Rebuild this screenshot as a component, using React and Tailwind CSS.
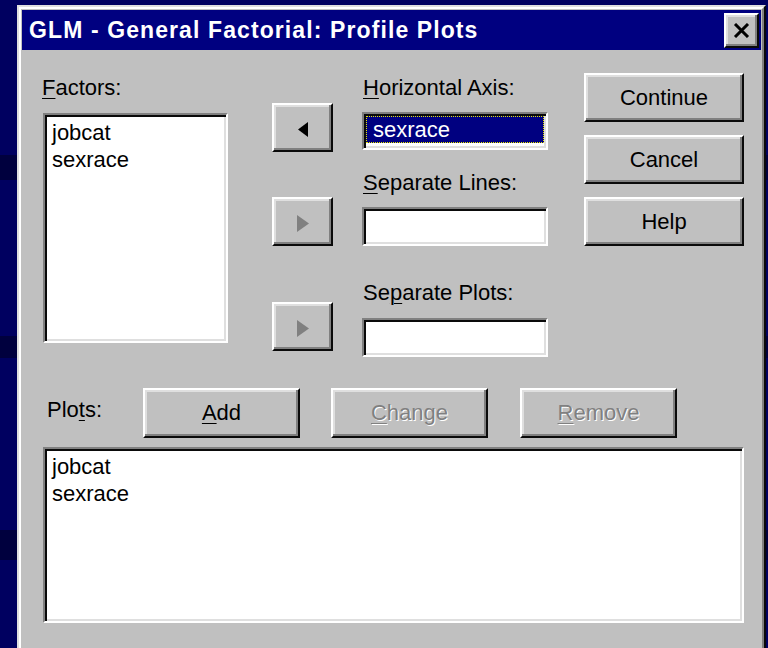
const raised =
  'border-2 border-t-white border-l-white border-r-[#0a0a0a] border-b-[#0a0a0a] bg-[#c0c0c0] shadow-[inset_-2px_-2px_0_#808080,inset_2px_2px_0_#dfdfdf]'
const sunken =
  'border-2 border-t-[#808080] border-l-[#808080] border-r-white border-b-white bg-white p-[2px] shadow-[inset_2px_2px_0_#0a0a0a,inset_-2px_-2px_0_#dfdfdf]'

function Key({ children }) {
  return <span className="underline decoration-1 underline-offset-[3px]">{children}</span>
}

function Button({ children, className = '', disabled = false }) {
  return (
    <button
      type="button"
      disabled={disabled}
      className={`${raised} flex items-center justify-center text-[22px] leading-[26px] ${
        disabled ? 'text-[#808080] [text-shadow:1px_1px_0_#ffffff]' : 'text-black'
      } ${className}`}
    >
      {children}
    </button>
  )
}

function Label({ children, className = '' }) {
  return <div className={`text-[22px] leading-[26px] text-black ${className}`}>{children}</div>
}

function ListBox({ items, className = '' }) {
  return (
    <div className={`${sunken} ${className}`}>
      <div className="pt-[2px] pl-[5px] text-[22px] leading-[27px] text-black">
        {items.map((item) => (
          <div key={item}>{item}</div>
        ))}
      </div>
    </div>
  )
}

function ArrowButton({ dir, className = '' }) {
  return (
    <button type="button" className={`${raised} flex h-[49px] w-[61px] items-center justify-center pt-[3px] ${className}`}>
      {dir === 'left' ? (
        <svg width="10" height="15" viewBox="0 0 10 15">
          <path d="M10 0 L0 7.5 L10 15 Z" fill="#000" />
        </svg>
      ) : (
        <svg width="12" height="17" viewBox="0 0 12 17">
          <path d="M0 0 L12 8.5 L0 17 Z" fill="#808080" />
        </svg>
      )}
    </button>
  )
}

export default function App() {
  return (
    <div className="h-[648px] w-[768px] overflow-hidden bg-[linear-gradient(to_bottom,#000060_0px,#000060_155px,#00003e_155px,#00003e_180px,#000060_180px,#000060_336px,#00003e_336px,#00003e_358px,#000060_358px,#000060_530px,#00003e_530px,#00003e_560px,#000060_560px)] pt-[5px] pl-[17px] font-['Liberation_Sans',Arial,sans-serif]">
      <div className="h-[660px] w-[749px] border-2 border-t-[#dfdfdf] border-l-[#dfdfdf] border-r-[#0a0a0a] border-b-[#0a0a0a] bg-[#c0c0c0]">
        <div className="h-full border-2 border-t-white border-l-white border-r-[#808080] border-b-[#808080] p-[1px]">
          {/* title bar */}
          <div className="flex h-[40px] items-center justify-between bg-[#000080] pl-[7px] pr-[2px]">
            <span className="text-[23px] font-bold leading-[40px] tracking-[1.1px] text-white">
              GLM - General Factorial: Profile Plots
            </span>
            <button type="button" className={`${raised} flex h-[35px] w-[35px] items-center justify-center`}>
              <svg width="17" height="15" viewBox="0 0 17 15">
                <path d="M2 1 L15 14 M15 1 L2 14" stroke="#000" strokeWidth="3" />
              </svg>
            </button>
          </div>

          {/* variable selection */}
          <div className="flex h-[338px] items-start">
            <div className="ml-[21px] flex w-[185px] flex-col">
              <Label className="mt-[25px] -ml-px">
                <Key>F</Key>actors:
              </Label>
              <ListBox className="mt-[12px] h-[230px]" items={['jobcat', 'sexrace']} />
            </div>

            <div className="ml-[44px] flex w-[61px] flex-col">
              <ArrowButton dir="left" className="mt-[53px]" />
              <ArrowButton dir="right" className="mt-[45px]" />
              <ArrowButton dir="right" className="mt-[56px]" />
            </div>

            <div className="ml-[29px] flex w-[186px] flex-col">
              <Label className="mt-[25px] ml-px">
                <Key>H</Key>orizontal Axis:
              </Label>
              <div className={`${sunken} mt-[11px] h-[38px]`}>
                <div className="h-[27px] border border-dotted border-[#e8e800] bg-[#000080] pl-[6px] text-[22px] leading-[25px] text-white">
                  sexrace
                </div>
              </div>
              <Label className="mt-[20px] ml-px">
                <Key>S</Key>eparate Lines:
              </Label>
              <div className={`${sunken} mt-[11px] h-[39px]`} />
              <Label className="mt-[34px] ml-px">
                Se<Key>p</Key>arate Plots:
              </Label>
              <div className={`${sunken} mt-[12px] h-[39px]`} />
            </div>

            <div className="ml-[36px] flex w-[160px] flex-col">
              <Button className="mt-[23px] h-[49px]">Continue</Button>
              <Button className="mt-[13px] h-[49px]">Cancel</Button>
              <Button className="mt-[13px] h-[49px]">Help</Button>
            </div>
          </div>

          {/* plot list */}
          <div className="flex h-[50px] items-start">
            <Label className="ml-[25px] mt-[9px] w-[96px]">
              Plo<Key>t</Key>s:
            </Label>
            <Button className="h-[50px] w-[157px]">
              <Key>A</Key>dd
            </Button>
            <Button disabled className="ml-[31px] h-[50px] w-[157px]">
              <Key>C</Key>hange
            </Button>
            <Button disabled className="ml-[32px] h-[50px] w-[157px]">
              <Key>R</Key>emove
            </Button>
          </div>
          <ListBox className="ml-[21px] mt-[9px] h-[176px] w-[701px]" items={['jobcat', 'sexrace']} />
        </div>
      </div>
    </div>
  )
}
